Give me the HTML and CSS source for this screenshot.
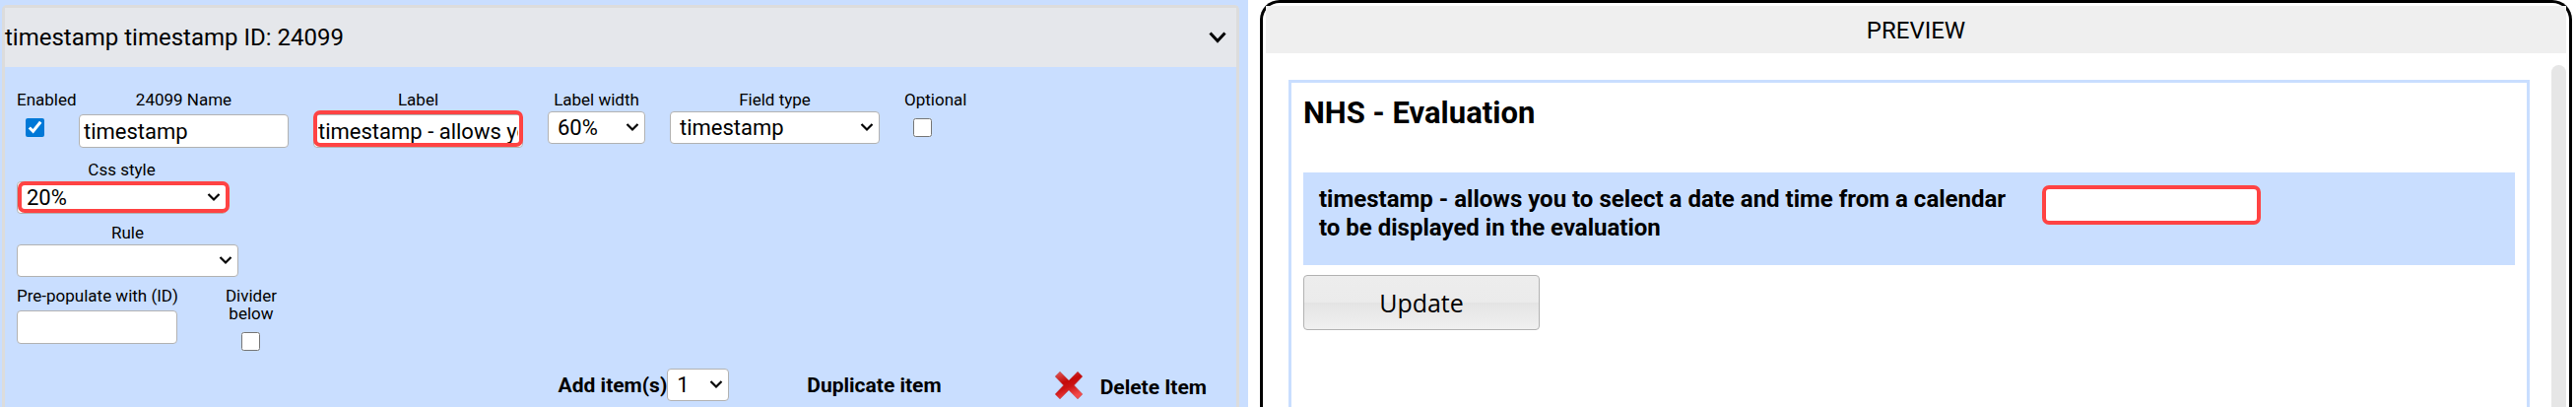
FILE: index.html
```html
<!DOCTYPE html>
<html lang="en">
<head>
	<meta charset="utf-8">
	<title>Evaluation editor</title>
	<link rel="stylesheet" href="styles.css">
</head>
<body>

<!-- shared chevron -->
<svg class="sprite" aria-hidden="true">
	<symbol id="chevron" viewBox="0 0 14 10">
		<path d="M1.5 2 L7 7.5 L12.5 2" fill="none" stroke="currentColor" stroke-width="2.2"/>
	</symbol>
</svg>

<div class="editor">
	<section class="item">
		<div class="item-header">
			<span>timestamp timestamp ID: 24099</span>
			<button type="button" class="toggle" aria-label="Collapse item">
				<svg viewBox="0 0 18 12"><path d="M1.5 1.5 L9 9.5 L16.5 1.5" fill="none" stroke="#000" stroke-width="3"/></svg>
			</button>
		</div>

		<form class="item-form">
			<div class="row">
				<div class="field field-enabled">
					<label for="enabled">Enabled</label>
					<input type="checkbox" id="enabled" checked>
				</div>
				<div class="field">
					<label for="name">24099 Name</label>
					<input type="text" class="text" id="name" value="timestamp">
				</div>
				<div class="field">
					<label for="label">Label</label>
					<div class="marked marked-text">
						<input type="text" class="text" id="label" value="timestamp - allows you to select a date and time from a calendar to be displayed in the evaluation">
					</div>
				</div>
				<div class="field">
					<label for="label-width">Label width</label>
					<div class="select select-small">
						<select id="label-width"><option>60%</option></select>
						<svg><use href="#chevron"/></svg>
					</div>
				</div>
				<div class="field">
					<label for="field-type">Field type</label>
					<div class="select">
						<select id="field-type"><option>timestamp</option></select>
						<svg><use href="#chevron"/></svg>
					</div>
				</div>
				<div class="field field-check">
					<label for="optional">Optional</label>
					<input type="checkbox" id="optional">
				</div>
			</div>

			<div class="row">
				<div class="field">
					<label for="css-style">Css style</label>
					<div class="select marked marked-select">
						<select id="css-style"><option>20%</option></select>
						<svg><use href="#chevron"/></svg>
					</div>
				</div>
			</div>

			<div class="row">
				<div class="field">
					<label for="rule">Rule</label>
					<div class="select select-wide">
						<select id="rule"><option></option></select>
						<svg><use href="#chevron"/></svg>
					</div>
				</div>
			</div>

			<div class="row">
				<div class="field">
					<label for="prepopulate">Pre-populate with (ID)</label>
					<input type="text" class="text text-short" id="prepopulate">
				</div>
				<div class="field field-divider">
					<label for="divider">Divider<br>below</label>
					<input type="checkbox" id="divider">
				</div>
			</div>

			<div class="actions">
				<div class="add">
					<label for="add-count">Add item(s)</label>
					<div class="select select-count">
						<select id="add-count"><option>1</option></select>
						<svg><use href="#chevron"/></svg>
					</div>
				</div>
				<button type="button" class="action">Duplicate item</button>
				<button type="button" class="action delete">
					<svg viewBox="0 0 30 30">
						<defs>
							<linearGradient id="cross" x1="0" y1="0" x2="0.4" y2="1">
								<stop offset="0" stop-color="#e0605e"/>
								<stop offset="0.45" stop-color="#c40a0a"/>
								<stop offset="0.65" stop-color="#cc1414"/>
								<stop offset="1" stop-color="#f24a4a"/>
							</linearGradient>
						</defs>
						<path d="M6 1 L15 10 L24 1 L29 6 L20.500 15 L29 24 L24 29 L15 20 L6 29 L1 24 L9.500 15 L1 6 Z" fill="url(#cross)" stroke="#b86a78" stroke-opacity="0.5" stroke-linejoin="round"/>
					</svg>
					<span>Delete Item</span>
				</button>
			</div>
		</form>
	</section>
</div>

<section class="preview">
	<div class="preview-header">PREVIEW</div>
	<div class="preview-body">
		<form class="evaluation">
			<h1>NHS - Evaluation</h1>
			<div class="question">
				<label for="answer">timestamp - allows you to select a date and time from a calendar to be displayed in the evaluation</label>
				<div class="answer"><input type="text" id="answer"></div>
			</div>
			<button type="button" class="update">Update</button>
		</form>
		<div class="scrollbar"></div>
	</div>
</section>

</body>
</html>
```

FILE: styles.css
```css
* {
	box-sizing: border-box;
}
body {
	display: grid;
	grid-template-columns: 1267fr 1332fr;
	gap: 12px;
	min-height: 100vh;
	margin: 0;
	padding-right: 4px;
	background: #fff;
	color: #000;
	font: 22px Roboto, sans-serif;
}
button, input, select {
	margin: 0;
	font: inherit;
	color: inherit;
}
.sprite {
	position: absolute;
	width: 0;
	height: 0;
}

/* left side */
.editor {
	display: flex;
	padding: 5px 9px 0 2px;
	background: #c9deff;
}
.item {
	flex: 1;
	border: 3px solid #dcdcdc;
	border-bottom: 0;
	border-radius: 5px 5px 0 0;
}
.item-header {
	display: flex;
	justify-content: space-between;
	align-items: center;
	height: 60px;
	padding-right: 10px;
	background: #e5e7eb;
	font-size: 24px;
}
.toggle {
	display: flex;
	padding: 0;
	border: 0;
	background: none;
}
.toggle svg {
	width: 18px;
	height: 12px;
}
.item-form {
	padding: 24px 30px 0 12px;
}
.row {
	display: flex;
	gap: 25px;
	margin-bottom: 10px;
}
.field {
	display: flex;
	flex-direction: column;
	align-items: center;
}
.field label {
	font-size: 17px;
	line-height: 18px;
	text-align: center;
}
.field-enabled {
	align-items: flex-start;
	width: 38px;
}
.field-check {
	align-items: flex-start;
}
.field-divider {
	width: 98px;
}
input[type="checkbox"] {
	width: 19px;
	height: 19px;
	margin: 10px 9px 0;
	accent-color: #0078d7;
}
.text {
	display: block;
	width: 213px;
	height: 34px;
	margin: 6px 0 3px;
	padding: 0 4px;
	border: 1px solid #b2b2b2;
	border-radius: 4px;
	background: #fff;
}
.text-short {
	width: 163px;
}
.select {
	position: relative;
	width: 213px;
	margin-top: 3px;
}
.select select {
	display: block;
	width: 100%;
	height: 33px;
	padding: 0 30px 0 9px;
	border: 1px solid #b2b2b2;
	border-radius: 4px;
	background: #fff;
	appearance: none;
}
.select svg {
	position: absolute;
	top: 11px;
	right: 6px;
	width: 14px;
	height: 10px;
	pointer-events: none;
}
.select-small {
	width: 99px;
}
.select-wide {
	width: 225px;
}
.select-count {
	width: 63px;
	margin: 0;
}

/* red frame over a control */
.marked {
	position: relative;
}
.marked::after {
	content: "";
	position: absolute;
	border: 4px solid #ff4343;
	border-radius: 7px;
	pointer-events: none;
}
.marked-text::after {
	inset: 2px 0 4px;
}
.marked-select::after {
	inset: 0 -3px 1px 1px;
}

.actions {
	display: flex;
	justify-content: flex-end;
	align-items: center;
	margin-top: 18px;
	font-size: 21px;
	font-weight: 700;
}
.add {
	display: flex;
	align-items: center;
}
.add select {
	font-size: 22px;
	font-weight: 400;
}
.action {
	display: flex;
	align-items: center;
	gap: 17px;
	margin-left: 79px;
	padding: 0;
	border: 0;
	background: none;
}
.delete {
	margin-left: 114px;
}
.delete svg {
	width: 30px;
	height: 30px;
}
.delete span {
	padding-top: 4px;
}

/* right side */
.preview {
	display: flex;
	flex-direction: column;
	padding: 3px 3px 0;
	border: 3px solid #000;
	border-bottom: 0;
	border-radius: 20px 20px 0 0;
}
.preview-header {
	height: 48px;
	background: #efefef;
	font-size: 24px;
	line-height: 50px;
	text-align: center;
}
.preview-body {
	display: flex;
	flex: 1;
	padding-left: 23px;
}
.evaluation {
	flex: 1;
	margin-top: 27px;
	padding: 0 12px;
	border: 3px solid #c9deff;
	border-bottom: 0;
}
.evaluation h1 {
	margin: 13px 0 42px;
	font-size: 31px;
	font-weight: 700;
	line-height: 36px;
}
.question {
	display: flex;
	padding: 13px 16px 23px;
	background: #c9deff;
}
.question label {
	width: 60%;
	font-size: 24px;
	font-weight: 700;
	line-height: 29px;
}
.answer {
	width: 40%;
	padding-left: 15px;
}
.answer input {
	display: block;
	width: 222px;
	height: 40px;
	border: 4px solid #ff4343;
	border-radius: 7px;
	background: #fff;
}
.update {
	width: 240px;
	height: 56px;
	margin-top: 10px;
	border: 1px solid #b2b2b2;
	border-radius: 4px;
	background: linear-gradient(#ededed, #ebebeb 50%, #e4e4e4 50%, #f0f0f0);
	font: 25px "Open Sans", sans-serif;
}
.scrollbar {
	width: 15px;
	margin: 12px 0 0 22px;
	border-radius: 8px 8px 0 0;
	background: #e6e6e6;
}
```
